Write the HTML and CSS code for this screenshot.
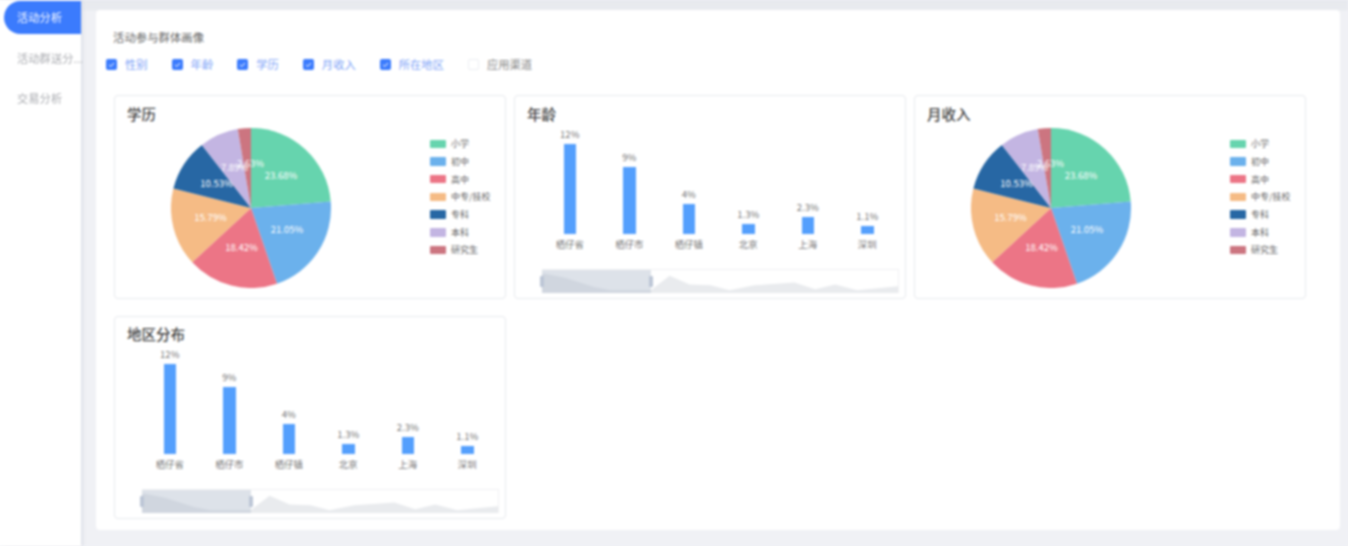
FILE: index.html
```html
<!DOCTYPE html>
<html lang="zh-CN">
<head>
    <meta charset="UTF-8">
    <meta name="viewport" content="width=device-width, initial-scale=1.0">
    <title>活动分析</title>
    <link rel="stylesheet" href="styles.css">
</head>
<body>
    <div class="page">
        <nav class="sidebar">
            <a class="menu-item active">活动分析</a>
            <a class="menu-item">活动群送分...</a>
            <a class="menu-item">交易分析</a>
        </nav>

        <main class="main">
            <section class="panel">
                <h1 class="panel-title">活动参与群体画像</h1>

                <div class="filters">
                    <label class="filter on"><svg class="box" viewBox="0 0 11 11"><path d="M3 5.8l1.8 1.7L8 4"/></svg>性别</label>
                    <label class="filter on"><svg class="box" viewBox="0 0 11 11"><path d="M3 5.8l1.8 1.7L8 4"/></svg>年龄</label>
                    <label class="filter on"><svg class="box" viewBox="0 0 11 11"><path d="M3 5.8l1.8 1.7L8 4"/></svg>学历</label>
                    <label class="filter on"><svg class="box" viewBox="0 0 11 11"><path d="M3 5.8l1.8 1.7L8 4"/></svg>月收入</label>
                    <label class="filter on"><svg class="box" viewBox="0 0 11 11"><path d="M3 5.8l1.8 1.7L8 4"/></svg>所在地区</label>
                    <label class="filter"><span class="box"></span>应用渠道</label>
                </div>

                <div class="charts">
                    <div class="card">
                        <h2 class="card-title">学历</h2>
                        <div class="pie-body">
                            <svg class="pie" viewBox="0 0 160 160">
                                <path fill="#66d4ae" d="M80 80V0A80 80 0 0 1 159.7 73.4Z"/>
                                <path fill="#6bb1ec" d="M80 80L159.7 73.4A80 80 0 0 1 106 155.7Z"/>
                                <path fill="#ec7586" d="M80 80L106 155.7A80 80 0 0 1 21.2 134.2Z"/>
                                <path fill="#f5bb85" d="M80 80L21.2 134.2A80 80 0 0 1 2.4 60.4Z"/>
                                <path fill="#2767a4" d="M80 80L2.4 60.4A80 80 0 0 1 30.9 16.9Z"/>
                                <path fill="#c3b5e2" d="M80 80L30.9 16.9A80 80 0 0 1 66.8 1.1Z"/>
                                <path fill="#cc7580" d="M80 80L66.8 1.1A80 80 0 0 1 80 0Z"/>
                                <text x="110" y="50.5">23.68%</text>
                                <text x="116" y="105">21.05%</text>
                                <text x="70.5" y="123">18.42%</text>
                                <text x="39.5" y="92.5">15.79%</text>
                                <text x="45.5" y="59">10.53%</text>
                                <text x="63.5" y="43">7.89%</text>
                                <text x="79.5" y="39">2.63%</text>
                            </svg>
                            <ul class="legend">
                                <li><i class="c1"></i>小学</li>
                                <li><i class="c2"></i>初中</li>
                                <li><i class="c3"></i>高中</li>
                                <li><i class="c4"></i>中专/技校</li>
                                <li><i class="c5"></i>专科</li>
                                <li><i class="c6"></i>本科</li>
                                <li><i class="c7"></i>研究生</li>
                            </ul>
                        </div>
                    </div>

                    <div class="card">
                        <h2 class="card-title">年龄</h2>
                        <div class="bars">
                            <div class="bar-col"><span class="bar-value">12%</span><div class="bar" style="height: 90px"></div><span class="bar-name">栖仔省</span></div>
                            <div class="bar-col"><span class="bar-value">9%</span><div class="bar" style="height: 67px"></div><span class="bar-name">栖仔市</span></div>
                            <div class="bar-col"><span class="bar-value">4%</span><div class="bar" style="height: 30px"></div><span class="bar-name">栖仔镇</span></div>
                            <div class="bar-col"><span class="bar-value">1.3%</span><div class="bar" style="height: 10px"></div><span class="bar-name">北京</span></div>
                            <div class="bar-col"><span class="bar-value">2.3%</span><div class="bar" style="height: 17px"></div><span class="bar-name">上海</span></div>
                            <div class="bar-col"><span class="bar-value">1.1%</span><div class="bar" style="height: 8px"></div><span class="bar-name">深圳</span></div>
                        </div>
                        <div class="zoom-bar">
                            <svg class="spark" viewBox="0 0 357 24" preserveAspectRatio="none"><path d="M0 4L3 4L23 8L53 18L69 21L109 21L128 6L148 15L169 16L188 21L213 16L253 13L274 20L294 15L316 21L357 17V24H0Z"/></svg>
                            <div class="zoom-window"><span class="handle left"></span><span class="handle right"></span></div>
                        </div>
                    </div>

                    <div class="card">
                        <h2 class="card-title">月收入</h2>
                        <div class="pie-body">
                            <svg class="pie" viewBox="0 0 160 160">
                                <path fill="#66d4ae" d="M80 80V0A80 80 0 0 1 159.7 73.4Z"/>
                                <path fill="#6bb1ec" d="M80 80L159.7 73.4A80 80 0 0 1 106 155.7Z"/>
                                <path fill="#ec7586" d="M80 80L106 155.7A80 80 0 0 1 21.2 134.2Z"/>
                                <path fill="#f5bb85" d="M80 80L21.2 134.2A80 80 0 0 1 2.4 60.4Z"/>
                                <path fill="#2767a4" d="M80 80L2.4 60.4A80 80 0 0 1 30.9 16.9Z"/>
                                <path fill="#c3b5e2" d="M80 80L30.9 16.9A80 80 0 0 1 66.8 1.1Z"/>
                                <path fill="#cc7580" d="M80 80L66.8 1.1A80 80 0 0 1 80 0Z"/>
                                <text x="110" y="50.5">23.68%</text>
                                <text x="116" y="105">21.05%</text>
                                <text x="70.5" y="123">18.42%</text>
                                <text x="39.5" y="92.5">15.79%</text>
                                <text x="45.5" y="59">10.53%</text>
                                <text x="63.5" y="43">7.89%</text>
                                <text x="79.5" y="39">2.63%</text>
                            </svg>
                            <ul class="legend">
                                <li><i class="c1"></i>小学</li>
                                <li><i class="c2"></i>初中</li>
                                <li><i class="c3"></i>高中</li>
                                <li><i class="c4"></i>中专/技校</li>
                                <li><i class="c5"></i>专科</li>
                                <li><i class="c6"></i>本科</li>
                                <li><i class="c7"></i>研究生</li>
                            </ul>
                        </div>
                    </div>

                    <div class="card card-region">
                        <h2 class="card-title">地区分布</h2>
                        <div class="bars">
                            <div class="bar-col"><span class="bar-value">12%</span><div class="bar" style="height: 90px"></div><span class="bar-name">栖仔省</span></div>
                            <div class="bar-col"><span class="bar-value">9%</span><div class="bar" style="height: 67px"></div><span class="bar-name">栖仔市</span></div>
                            <div class="bar-col"><span class="bar-value">4%</span><div class="bar" style="height: 30px"></div><span class="bar-name">栖仔镇</span></div>
                            <div class="bar-col"><span class="bar-value">1.3%</span><div class="bar" style="height: 10px"></div><span class="bar-name">北京</span></div>
                            <div class="bar-col"><span class="bar-value">2.3%</span><div class="bar" style="height: 17px"></div><span class="bar-name">上海</span></div>
                            <div class="bar-col"><span class="bar-value">1.1%</span><div class="bar" style="height: 8px"></div><span class="bar-name">深圳</span></div>
                        </div>
                        <div class="zoom-bar">
                            <svg class="spark" viewBox="0 0 357 24" preserveAspectRatio="none"><path d="M0 4L3 4L23 8L53 18L69 21L109 21L128 6L148 15L169 16L188 21L213 16L253 13L274 20L294 15L316 21L357 17V24H0Z"/></svg>
                            <div class="zoom-window"><span class="handle left"></span><span class="handle right"></span></div>
                        </div>
                    </div>
                </div>
            </section>
        </main>
    </div>
</body>
</html>
```

FILE: styles.css
```css
html, body {
    margin: 0;
    height: 100%;
    overflow: hidden;
    background-color: #f0f1f5;
}

body {
    font-family: "Noto Sans CJK SC", "Liberation Sans", sans-serif;
}

/* the reference is a soft, upscaled capture */
.page {
    display: flex;
    height: 546px;
    filter: blur(0.9px);
}

.sidebar {
    flex: 0 0 81px;
    width: 81px;
    min-width: 0;
    display: flex;
    flex-direction: column;
    gap: 7.5px;
    padding-top: 1px;
    box-sizing: border-box;
    background-color: #fff;
    box-shadow: 2px 0 3px #dcdfe7, -4px 0 0 #fff;
    position: relative;
}

.menu-item {
    height: 33px;
    margin-left: 4px;
    padding-left: 13px;
    font-size: 11.3px;
    line-height: 33px;
    color: #a9abb0;
    white-space: nowrap;
}

.menu-item.active {
    background-color: #3b7bfd;
    border-radius: 17px 0 0 17px;
    color: #fff;
}

.main {
    flex: 1;
    min-width: 0;
    padding: 10px 8px 16px 15px;
    background: linear-gradient(#e7e9ee 0, #e9ebef 10px, #f0f1f5 11px);
}

.panel {
    height: 100%;
    box-sizing: border-box;
    padding-top: 19px;
    background-color: #fff;
    border-radius: 4px;
}

.panel-title {
    margin: 0 0 12px 17px;
    font-size: 11.4px;
    font-weight: 400;
    line-height: 16px;
    color: #666;
}

.filters {
    display: flex;
    gap: 24px;
    margin: 0 0 24px 10px;
    height: 14px;
}

.filter {
    display: flex;
    align-items: center;
    gap: 8px;
    font-size: 11.3px;
    color: #888;
}

.filter.on {
    color: #7ea3f7;
}

.box {
    width: 11px;
    height: 11px;
    box-sizing: border-box;
    border: 1px solid #eceef2;
    border-radius: 2px;
}

.filter.on .box {
    border: 0;
    background-color: #3b7bfd;
    fill: none;
    stroke: #fff;
    stroke-width: 1;
}

.charts {
    display: grid;
    grid-template-columns: repeat(3, 392px);
    grid-template-rows: 204px 203px;
    column-gap: 8px;
    row-gap: 17px;
    margin-left: 18px;
}

.card {
    box-sizing: border-box;
    border: 1px solid #e8eaee;
    border-radius: 4px;
    background-color: #fff;
}

.card-title {
    margin: 8px 0 3px 12px;
    font-size: 14.5px;
    font-weight: 500;
    line-height: 20px;
    color: #444;
}

.card-region .card-title {
    margin-top: 7px;
}

.pie-body {
    display: flex;
    padding-left: 56px;
}

.pie {
    flex: 0 0 160px;
    width: 160px;
    height: 160px;
    margin-top: 0.5px;
}

.pie text {
    font-size: 9.5px;
    fill: #fff;
    text-anchor: middle;
}

.legend {
    margin: 8px 0 0 99px;
    padding: 0;
    list-style: none;
    font-size: 9px;
    color: #666;
}

.legend li {
    display: flex;
    align-items: center;
    gap: 5px;
    height: 17.7px;
    white-space: nowrap;
}

.legend i {
    width: 16px;
    height: 8.5px;
    border-radius: 1px;
}

.c1 { background-color: #66d4ae; }
.c2 { background-color: #6bb1ec; }
.c3 { background-color: #ec7586; }
.c4 { background-color: #f5bb85; }
.c5 { background-color: #2767a4; }
.c6 { background-color: #c3b5e2; }
.c7 { background-color: #cc7580; }

.bars {
    display: grid;
    grid-template-columns: repeat(6, 1fr);
    width: 357px;
    height: 125px;
    margin-left: 25px;
}

.bar-col {
    display: flex;
    flex-direction: column;
    justify-content: flex-end;
    align-items: center;
}

.bar-value {
    margin-bottom: 4px;
    font-size: 9.5px;
    line-height: 12px;
    color: #777;
}

.bar {
    width: 12.5px;
    background-color: #549ffd;
}

.bar-name {
    margin-top: 2px;
    font-size: 9.4px;
    line-height: 16px;
    color: #777;
}

.zoom-bar {
    position: relative;
    width: 357px;
    height: 24px;
    margin: 17px 0 0 26.5px;
    box-sizing: border-box;
    border: 1px solid #f0f1f3;
    border-left: 0;
    border-bottom: 0;
}

.spark {
    display: block;
    width: 100%;
    height: 100%;
}

.spark path {
    fill: #e9ebee;
}

.zoom-window {
    position: absolute;
    left: 0;
    top: 0;
    bottom: 0;
    width: 109px;
    background-color: rgba(170, 182, 200, 0.4);
}

.handle {
    position: absolute;
    top: 6px;
    width: 4px;
    height: 11px;
    background-color: #bcc6d6;
    border-radius: 1px;
}

.handle.left {
    left: -2px;
}

.handle.right {
    right: -2px;
}
```
